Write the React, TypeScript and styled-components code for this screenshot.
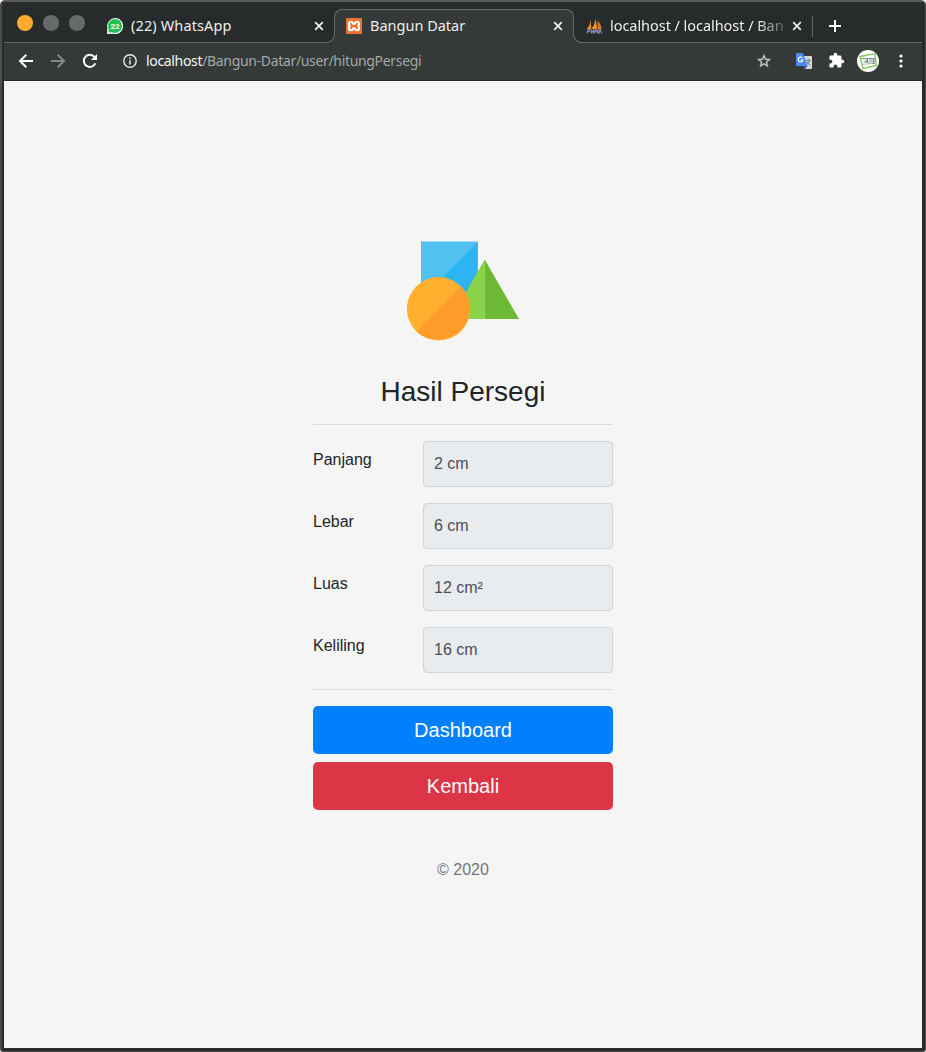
import React from "react";
import styled, { createGlobalStyle } from "styled-components";

const STRIP = "#272b2c";
const BAR = "#353938";
const LINE = "#656a6a";

const GlobalStyle = createGlobalStyle`
  * { box-sizing: border-box; }
  html, body { margin: 0; padding: 0; }
  body { background: #fff; overflow: hidden; font-family: "Liberation Sans", Arial, sans-serif; }
`;

const Window = styled.div`
  width: 926px;
  height: 1052px;
  display: flex;
  flex-direction: column;
  background: ${STRIP};
  border: 2px solid #4d4c4b;
  border-top-color: #5a5b5c;
  border-right-width: 1px;
  border-bottom-width: 1px;
  border-radius: 5px 5px 3px 3px;
  padding: 0 3px 3px 2px;
`;

const TabStrip = styled.div`
  height: 41px;
  flex: none;
  display: flex;
  align-items: stretch;
  box-shadow: inset 0 -1px ${LINE};
  font-family: "Noto Sans", sans-serif;
`;

const WindowControls = styled.div`
  display: flex;
  gap: 10px;
  padding: 13px 0 0 13px;
  width: 91px;
`;

const ControlDot = styled.span<{ $color: string }>`
  width: 16px;
  height: 16px;
  border-radius: 50%;
  background: ${(p) => p.$color};
`;

const Tab = styled.div<{ $width: number; $active?: boolean }>`
  position: relative;
  flex: none;
  width: ${(p) => p.$width}px;
  margin-top: 7px;
  padding: 0 10px 1px 11px;
  display: flex;
  align-items: center;
  border: 1px solid ${(p) => (p.$active ? LINE : "transparent")};
  border-bottom: 0;
  border-radius: 8px 8px 0 0;
  ${(p) =>
    p.$active
      ? `
    background: ${BAR};
    &::before, &::after {
      content: "";
      position: absolute;
      bottom: 0;
      width: 9px;
      height: 9px;
    }
    &::before {
      left: -9px;
      background: radial-gradient(circle at 0 0, ${STRIP} 7.7px, ${LINE} 8.2px, ${LINE} 8.8px, ${BAR} 9.3px);
    }
    &::after {
      right: -9px;
      background: radial-gradient(circle at 100% 0, ${STRIP} 7.7px, ${LINE} 8.2px, ${LINE} 8.8px, ${BAR} 9.3px);
    }
  `
      : "padding-right: 9px;"}
`;

const TabTitle = styled.span<{ $spacing: number; $fade?: boolean }>`
  flex: 1;
  margin: -2px 4px 0 8px;
  white-space: nowrap;
  font-size: 14.5px;
  line-height: 20px;
  letter-spacing: ${(p) => p.$spacing}px;
  color: #eeeeec;
  ${(p) =>
    p.$fade &&
    "margin-left: 7px; mask-image: linear-gradient(90deg, #000 82%, rgba(0, 0, 0, 0.15) 100%);"}
`;

const Divider = styled.span`
  width: 1px;
  height: 21px;
  margin: 14px 16px 0 0;
  background: #5f6465;
`;

const NewTab = styled.span`
  display: flex;
  margin-top: 18px;
`;

const Toolbar = styled.div`
  height: 38px;
  flex: none;
  display: flex;
  align-items: center;
  padding: 0 19px 2px 14px;
  background: ${BAR};
  border-bottom: 1px solid #252928;
`;

const NavButtons = styled.div`
  display: flex;
  gap: 16px;
  width: 105px;
`;

const Address = styled.div`
  flex: 1;
  display: flex;
  align-items: center;
  gap: 9px;
  font: 14px/20px "Noto Sans", sans-serif;
  letter-spacing: -0.33px;
  color: #a3a8a8;
`;

const Host = styled.span`
  color: #f6f6f5;
`;

const Actions = styled.div`
  display: flex;
  align-items: center;
`;

const Slot = styled.span<{ $after: number }>`
  display: flex;
  margin-right: ${(p) => p.$after}px;
`;

const Page = styled.main`
  flex: 1;
  display: flex;
  flex-direction: column;
  align-items: center;
  background: #f5f5f5;
  padding-top: 160px;
`;

const Form = styled.section`
  width: 300px;
  display: flex;
  flex-direction: column;
  align-items: center;
  font-size: 16px;
  line-height: 24px;
  color: #212529;
`;

const Heading = styled.h1`
  margin: 34px 0 15px;
  font-size: 28px;
  line-height: 34px;
  font-weight: 400;
`;

const Rule = styled.hr`
  width: 100%;
  height: 1px;
  margin: 0 0 16px;
  border: 0;
  background: #dcdcdd;
`;

const Field = styled.label`
  width: 100%;
  height: 46px;
  margin-bottom: 16px;
  display: grid;
  grid-template-columns: 110px 190px;
`;

const FieldName = styled.span`
  padding-top: 7px;
`;

const FieldValue = styled.input`
  width: 190px;
  height: 46px;
  padding: 0 10px;
  border: 1px solid #ced4da;
  border-radius: 4px;
  background: #e9ecef;
  color: #495057;
  font: 16px "Liberation Sans", Arial, sans-serif;
  outline: 0;
`;

const Button = styled.button<{ $color: string }>`
  width: 100%;
  height: 48px;
  margin-bottom: 8px;
  padding: 0;
  border: 0;
  border-radius: 5px;
  background: ${(p) => p.$color};
  color: #fff;
  font: 20px "Liberation Sans", Arial, sans-serif;
`;

const Copyright = styled.p`
  margin: 40px 0 0;
  color: #6c757d;
`;

const CloseIcon = () => (
  <svg width="10" height="10" viewBox="0 0 10 10" stroke="#f2f2f2" strokeWidth="1.7">
    <path d="M1.2 1.2 8.8 8.8M8.8 1.2 1.2 8.8" />
  </svg>
);

const WhatsAppIcon = () => (
  <svg width="16" height="16" viewBox="0 0 16 16">
    <path d="M0 16 .4 10A8 8 0 1 1 6 15.8Z" fill="#fff" />
    <path d="M1.4 14.6 1.8 11A7 7 0 1 1 5 14.2Z" fill="#23c052" />
    <text x="8" y="10.9" textAnchor="middle" fontSize="8" fontWeight="700" fontFamily="Roboto, sans-serif" fill="#fff">22</text>
  </svg>
);

const XamppIcon = () => (
  <svg width="16" height="16" viewBox="0 0 16 16">
    <rect width="16" height="16" rx="1" fill="#ef7130" />
    <path
      d="M5.2 3.7C3.6 3.7 3 4.6 3 5.8 3 7 3.6 8 4.6 8 3.6 8 3 9 3 10.2c0 1.2.6 2.1 2.2 2.1C7.2 12.3 6.6 10 8 10s.8 2.3 2.8 2.3c1.6 0 2.2-.9 2.2-2.1C13 9 12.4 8 11.4 8c1 0 1.6-1 1.6-2.2 0-1.2-.6-2.1-2.2-2.1C8.8 3.7 9.4 6 8 6S7.2 3.7 5.2 3.7Z"
      fill="none"
      stroke="#fff"
      strokeWidth="2.1"
    />
  </svg>
);

const SailsIcon = () => (
  <svg width="17" height="16" viewBox="0 0 17 16">
    <path d="M4.6 2 5.4 11H.8Q4.2 7 4.6 2Z" fill="#e58a2b" />
    <path d="M9.5 0 11.2 11H5.5Q9.3 6 9.5 0Z" fill="#f79420" />
    <path d="M11.5 2.5Q15.2 6 15.7 11.5H11.8Z" fill="#d8772a" />
    <path d="M1 15.5 2 11.5H4L3.5 13.5H1.8M5 15.5 6 11.5M8 11.5 7 15.5M5.5 13.5H7.5M8 15.5 9.5 11.5 10.5 14 12 11.5 11.8 15.5M13 15.5 14 11.5 16 15.5" fill="none" stroke="#8588ae" strokeWidth="1.2" />
  </svg>
);

const PlusIcon = () => (
  <svg width="12" height="12" viewBox="0 0 12 12" stroke="#fff" strokeWidth="2">
    <path d="M6 0V12M0 6H12" />
  </svg>
);

const ArrowIcon = ({ color, flip }: { color: string; flip?: boolean }) => (
  <svg width="16" height="16" viewBox="0 0 16 16" fill="none" stroke={color} strokeWidth="2">
    <path d={flip ? "M1 8H14M7.7 1.7 14 8 7.7 14.3" : "M15 8H2M8.3 1.7 2 8 8.3 14.3"} />
  </svg>
);

const ReloadIcon = () => (
  <svg width="16" height="16" viewBox="0 0 16 16">
    <path d="M13.3 10.3A6 6 0 1 1 12.4 4" fill="none" stroke="#fff" strokeWidth="2" />
    <path d="M15 1V7H9Z" fill="#fff" />
  </svg>
);

const InfoIcon = () => (
  <svg width="14" height="14" viewBox="0 0 14 14">
    <circle cx="7" cy="7" r="6.2" fill="none" stroke="#e8e8e8" strokeWidth="1.4" />
    <path d="M7 6.2V10.5M7 3.4V4.9" stroke="#e8e8e8" strokeWidth="1.6" />
  </svg>
);

const StarIcon = () => (
  <svg width="16" height="16" viewBox="0 0 24 24">
    <path
      d="M22 9.24l-7.19-.62L12 2 9.19 8.63 2 9.24l5.46 4.73L5.82 21 12 17.27 18.18 21l-1.63-7.03L22 9.24zM12 15.4l-3.76 2.27 1-4.28-3.32-2.88 4.38-.38L12 6.1l1.71 4.04 4.38.38-3.32 2.88 1 4.28L12 15.4z"
      fill="#c9cbca"
      stroke="#c9cbca"
      strokeWidth=".6"
    />
  </svg>
);

const TranslateIcon = () => (
  <svg width="16" height="16" viewBox="0 0 16 16">
    <path d="M6 3H15.2Q16 3 16 4V15Q16 16 15 16H9Z" fill="#d5d8da" />
    <path d="M9.8 7.3H14.8M12.3 6V7.3M13.8 7.3Q13 10.6 10 12M10.7 8.5Q12 11 14.4 12.3" fill="none" stroke="#607d80" />
    <path d="M8 13H11.5L9 16Z" fill="#3155c5" />
    <path d="M1 0H7L11.5 13H1Q0 13 0 12V1Q0 0 1 0Z" fill="#4a8af4" />
    <path d="M6.2 4.9A2.3 2.3 0 1 0 6.8 7H4.7" fill="none" stroke="#fff" strokeWidth="1.2" />
  </svg>
);

const PuzzleIcon = () => (
  <svg width="17" height="17" viewBox="0 0 24 24" fill="#fff">
    <path d="M20.5 11H19V7c0-1.1-.9-2-2-2h-4V3.5a2.5 2.5 0 0 0-5 0V5H4c-1.1 0-1.99.9-1.99 2v3.8H3.5c1.49 0 2.7 1.21 2.7 2.7s-1.21 2.7-2.7 2.7H2V20c0 1.1.9 2 2 2h3.8v-1.5c0-1.49 1.21-2.7 2.7-2.7s2.7 1.21 2.7 2.7V22H17c1.1 0 2-.9 2-2v-4h1.5a2.5 2.5 0 0 0 0-5z" />
  </svg>
);

const AvatarIcon = () => (
  <svg width="22" height="22" viewBox="0 0 22 22">
    <circle cx="11" cy="11" r="11" fill="#fff" />
    <path d="M3 6.5 18 3.7 19.3 15.5 6 18.7Z" fill="none" stroke="#78c850" strokeWidth="1.3" />
    <path d="M4.5 8.5H10.5V12H6.5M8.5 10.3 12 13M11.5 8.6H17V13.4H12.7M12 11H17" fill="none" stroke="#7d8884" strokeWidth="1.2" />
    <path d="M5 14.5 15.5 13.3" stroke="#b5c2ba" />
  </svg>
);

const MenuIcon = () => (
  <svg width="4" height="14" viewBox="0 0 4 14" fill="#fff">
    <circle cx="2" cy="2" r="1.6" />
    <circle cx="2" cy="7" r="1.6" />
    <circle cx="2" cy="12" r="1.6" />
  </svg>
);

const ShapesLogo = () => (
  <svg width="112" height="100" viewBox="0 0 112 100">
    <path d="M14 .5H71V57H14Z" fill="#50c1f1" />
    <path d="M70.3 1.5V57H14.5Z" fill="#2cb5f2" />
    <path d="M77.7 18.5V78H43.5Z" fill="#8ad349" />
    <path d="M77.7 18.5 112 78H77.7Z" fill="#6bb935" />
    <circle cx="31.6" cy="67.8" r="31.7" fill="#ffb02e" />
    <path d="M54.2 45.6A31.7 31.7 0 0 1 9.4 90.4Z" fill="#ff9c2a" />
  </svg>
);

const results = [
  { name: "Panjang", value: "2 cm" },
  { name: "Lebar", value: "6 cm" },
  { name: "Luas", value: "12 cm²" },
  { name: "Keliling", value: "16 cm" },
];

export default function App() {
  return (
    <>
      <GlobalStyle />
      <Window>
        <TabStrip>
          <WindowControls>
            <ControlDot $color="#ffab2e" />
            <ControlDot $color="#696b6a" />
            <ControlDot $color="#696b6a" />
          </WindowControls>
          <Tab $width={239}>
            <WhatsAppIcon />
            <TabTitle $spacing={0.13}>(22) WhatsApp</TabTitle>
            <CloseIcon />
          </Tab>
          <Tab $width={240} $active>
            <XamppIcon />
            <TabTitle $spacing={0}>Bangun Datar</TabTitle>
            <CloseIcon />
          </Tab>
          <Tab $width={238}>
            <SailsIcon />
            <TabTitle $spacing={-0.05} $fade>localhost / localhost / Ban</TabTitle>
            <CloseIcon />
          </Tab>
          <Divider />
          <NewTab>
            <PlusIcon />
          </NewTab>
        </TabStrip>
        <Toolbar>
          <NavButtons>
            <ArrowIcon color="#fff" />
            <ArrowIcon color="#858887" flip />
            <ReloadIcon />
          </NavButtons>
          <Address>
            <InfoIcon />
            <span>
              <Host>localhost</Host>/Bangun-Datar/user/hitungPersegi
            </span>
          </Address>
          <Actions>
            <Slot $after={24}><StarIcon /></Slot>
            <Slot $after={16}><TranslateIcon /></Slot>
            <Slot $after={12}><PuzzleIcon /></Slot>
            <Slot $after={20}><AvatarIcon /></Slot>
            <MenuIcon />
          </Actions>
        </Toolbar>
        <Page>
          <Form>
            <ShapesLogo />
            <Heading>Hasil Persegi</Heading>
            <Rule />
            {results.map((r) => (
              <Field key={r.name}>
                <FieldName>{r.name}</FieldName>
                <FieldValue readOnly value={r.value} />
              </Field>
            ))}
            <Rule />
            <Button $color="#007fff">Dashboard</Button>
            <Button $color="#dc3545">Kembali</Button>
            <Copyright>© 2020</Copyright>
          </Form>
        </Page>
      </Window>
    </>
  );
}
